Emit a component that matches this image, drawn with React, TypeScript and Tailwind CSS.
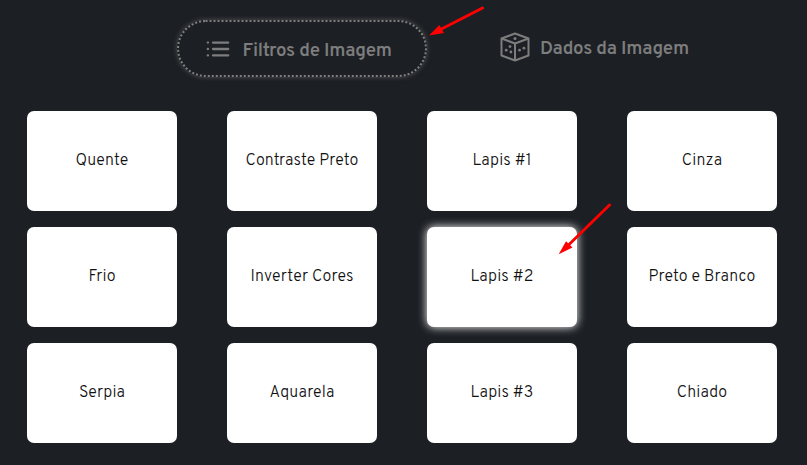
import React from "react";

type Filter = { label: string; active?: boolean };

const filters: Filter[] = [
  { label: "Quente" },
  { label: "Contraste Preto" },
  { label: "Lapis #1" },
  { label: "Cinza" },
  { label: "Frio" },
  { label: "Inverter Cores" },
  { label: "Lapis #2", active: true },
  { label: "Preto e Branco" },
  { label: "Serpia" },
  { label: "Aquarela" },
  { label: "Lapis #3" },
  { label: "Chiado" },
];

function ListIcon() {
  return (
    <svg width="24" height="18" viewBox="0 0 24 18" fill="none" stroke="#7d7d7d" strokeWidth="2.3" strokeLinecap="round">
      <path d="M7 2.6H22.2M7 9H22.2M7 15.4H22.2" />
      <path d="M1.8 2.6H2M1.8 9H2M1.8 15.4H2" />
    </svg>
  );
}

function DiceIcon() {
  return (
    <svg width="30" height="30" viewBox="0 0 30 30" fill="none" stroke="#7d7d7d" strokeWidth="2" strokeLinejoin="round">
      <path d="M15 1.5L28.5 6.5V23.5L15 28.5L1.5 23.5V6.5Z" />
      <path d="M1.5 6.5L15 11.5L28.5 6.5M15 11.5V28.5" />
      <g fill="#7d7d7d" stroke="none">
        <circle cx="15" cy="6.5" r="1.5" />
        <circle cx="10" cy="14.6" r="1.4" />
        <circle cx="6.2" cy="18.2" r="1.4" />
        <circle cx="10.9" cy="20" r="1.4" />
        <circle cx="19.5" cy="18.2" r="1.4" />
        <circle cx="23.9" cy="16.2" r="1.4" />
      </g>
    </svg>
  );
}

export default function App() {
  return (
    <main className="relative h-[465px] w-[807px] overflow-hidden bg-[#1c1f24] pt-5 font-['Overpass','Roboto',sans-serif]">
      <nav className="flex h-[57px] pl-[177px]">
        <button className="flex h-[57px] w-[250px] items-center rounded-[30px] border-2 border-dotted border-[#808080] pl-[27px] shadow-[0_0_5px_#555]">
          <ListIcon />
          <span className="ml-[12.5px] pt-[5px] whitespace-nowrap text-[18.72px] leading-6 font-semibold tracking-[-0.25px] text-[#7d7d7d]">Filtros de Imagem</span>
        </button>
        <button className="ml-[73px] flex h-[54px] items-center">
          <DiceIcon />
          <span className="ml-[10px] pt-[4px] whitespace-nowrap text-[18.72px] leading-6 font-semibold tracking-[-0.25px] text-[#7d7d7d]">Dados da Imagem</span>
        </button>
      </nav>
      <section className="mt-[34px] grid grid-cols-[repeat(4,150px)] gap-x-[50px] gap-y-4 pl-[27px]">
        {filters.map((f) => (
          <button
            key={f.label}
            className={`flex h-[100px] items-center justify-center rounded-[7px] bg-white text-base leading-6 font-light tracking-[0.12px] whitespace-nowrap text-[#111] ${f.active ? "shadow-[0_0_10px_#fff]" : ""}`}
          >
            {f.label}
          </button>
        ))}
      </section>
      <svg className="pointer-events-none absolute inset-0" width="807" height="465" fill="#ff0000" stroke="#ff0000">
        <path d="M482.5 8L440 29.8M609.5 205L568 245.5" strokeWidth="2.9" strokeLinecap="round" />
        <path d="M429 35.5L439.3 25L444 33ZM558.7 254.3L566 241.3L572.5 247.5Z" stroke="none" />
      </svg>
    </main>
  );
}
